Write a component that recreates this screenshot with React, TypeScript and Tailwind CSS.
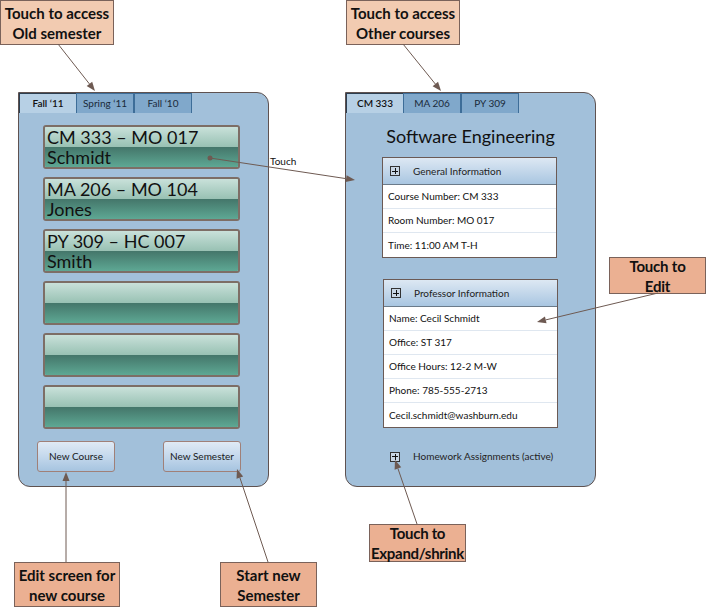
import React from "react";

const font = { fontFamily: "Lato, 'Open Sans', 'Liberation Sans', sans-serif" };

function Callout({ lines, className }: { lines: string[]; className: string }) {
  return (
    <div
      className={`absolute flex flex-col items-center justify-center border border-[#7a625a] text-[15px] font-bold leading-[20px] text-[#111] ${className}`}
    >
      {lines.map((l) => (
        <span key={l}>{l}</span>
      ))}
    </div>
  );
}

function Tabs({ labels }: { labels: string[] }) {
  return (
    <div className="flex h-[20px]">
      {labels.map((l, i) => (
        <div
          key={l}
          className={
            i === 0
              ? "flex w-[57px] items-center justify-center border-t border-l border-[#2c3e50] bg-[#b7d0e5] text-[10px] font-semibold text-[#111]"
              : "flex w-[58px] items-center justify-center border border-b-0 border-[#3d6d98] bg-[#80a8cb] text-[10px] text-[#1a2a3a]"
          }
        >
          {l}
        </div>
      ))}
    </div>
  );
}

function Card({ top, bottom }: { top?: string; bottom?: string }) {
  return (
    <div className="flex h-[44px] w-[197px] flex-col overflow-hidden rounded-[3px] border-2 border-[#7d6e66] text-[18px] leading-[20px] text-[#111]">
      <div className="flex h-[20px] items-center bg-gradient-to-b from-[#c9e1da] to-[#98c1b3] pl-[2px]">{top}</div>
      <div className="flex flex-1 items-center bg-gradient-to-b from-[#44766a] to-[#5ea894] pl-[2px]">{bottom}</div>
    </div>
  );
}

function Btn({ label }: { label: string }) {
  return (
    <div className="flex h-[31px] w-[78px] items-center justify-center rounded-[3px] border border-[#a08078] bg-gradient-to-b from-[#e0eaf5] via-[#c4d8ec] to-[#a6c4e0] text-[10px] text-[#1a1a1a]">
      {label}
    </div>
  );
}

function Plus() {
  return (
    <div className="relative h-[10px] w-[10px] border border-[#333] bg-[#c8d6e4]">
      <div className="absolute left-[1px] right-[1px] top-[3.5px] h-[1px] bg-[#111]" />
      <div className="absolute top-[1px] bottom-[1px] left-[3.5px] w-[1px] bg-[#111]" />
    </div>
  );
}

function InfoBox({ title, rows, className }: { title: string; rows: string[]; className: string }) {
  return (
    <div className={`flex w-[175px] flex-col border border-[#6b5a55] bg-white ${className}`}>
      <div className="flex h-[27px] items-center gap-[13px] border-b border-[#6b7b8a] bg-gradient-to-b from-[#dde8f3] to-[#a9c6e1] pl-[7px] text-[10px] text-[#222]">
        <Plus />
        <span>{title}</span>
      </div>
      {rows.map((r, i) => (
        <div
          key={r}
          className={`flex h-[24px] items-center pl-[5px] text-[10px] text-[#111] ${i < rows.length - 1 ? "border-b border-[#dfe7f0]" : ""}`}
        >
          {r}
        </div>
      ))}
    </div>
  );
}

function Arrows() {
  const c = "#6e5a52";
  const lines: [number, number, number, number][] = [
    [58, 44, 95, 91],
    [403, 44, 441, 91],
    [210, 158, 355, 180],
    [658, 293, 537, 322],
    [417, 524, 395, 460],
    [66, 562, 66, 472],
    [268, 562, 237, 469],
  ];
  return (
    <svg className="pointer-events-none absolute left-0 top-0" width="706" height="607">
      {lines.map(([x1, y1, x2, y2], i) => {
        const a = Math.atan2(y2 - y1, x2 - x1);
        const L = 9;
        const W = 3.5;
        const bx = x2 - L * Math.cos(a);
        const by = y2 - L * Math.sin(a);
        const px = -Math.sin(a) * W;
        const py = Math.cos(a) * W;
        return (
          <g key={i}>
            <line x1={x1} y1={y1} x2={bx} y2={by} stroke={c} strokeWidth={1} />
            <polygon points={`${x2},${y2} ${bx + px},${by + py} ${bx - px},${by - py}`} fill={c} />
          </g>
        );
      })}
      <circle cx={210} cy={158} r={2.5} fill={c} />
    </svg>
  );
}

export default function App() {
  return (
    <div className="relative h-[607px] w-[706px] overflow-hidden bg-white" style={font}>
      {/* Left panel */}
      <div className="absolute left-[18px] top-[92px] flex h-[395px] w-[251px] flex-col rounded-tr-[12px] rounded-b-[12px] border border-[#5f5250] bg-[#a2c0da]">
        <Tabs labels={["Fall \u201811", "Spring \u201811", "Fall \u201810"]} />
        <div className="flex flex-col gap-[8px] pl-[24px] pt-[12px]">
          <Card top="CM 333 – MO 017" bottom="Schmidt" />
          <Card top="MA 206 – MO 104" bottom="Jones" />
          <Card top="PY 309 – HC 007" bottom="Smith" />
          <Card />
          <Card />
          <Card />
        </div>
        <div className="flex justify-between pl-[18px] pr-[27px] pt-[12px]">
          <Btn label="New Course" />
          <Btn label="New Semester" />
        </div>
      </div>

      {/* Right panel */}
      <div className="absolute left-[345px] top-[92px] flex h-[395px] w-[251px] flex-col rounded-tr-[12px] rounded-b-[12px] border border-[#5f5250] bg-[#a2c0da]">
        <Tabs labels={["CM 333", "MA 206", "PY 309"]} />
        <div className="pt-[10px] text-center text-[18px] leading-[26px] text-[#111]">Software Engineering</div>
        <InfoBox
          className="ml-[36px] mt-[8px]"
          title="General Information"
          rows={["Course Number: CM 333", "Room Number: MO 017", "Time: 11:00 AM T-H"]}
        />
        <InfoBox
          className="ml-[37px] mt-[21px] w-[174px]"
          title="Professor Information"
          rows={["Name: Cecil Schmidt", "Office: ST 317", "Office Hours: 12-2 M-W", "Phone: 785-555-2713", "Cecil.schmidt@washburn.edu"]}
        />
        <div className="ml-[44px] mt-[21px] flex items-center gap-[13px] text-[10px] text-[#222]">
          <Plus />
          <span>Homework Assignments (active)</span>
        </div>
      </div>

      <div className="absolute left-[270px] top-[154px] text-[10px] text-[#111]">Touch</div>

      <Callout className="left-0 top-0 h-[45px] w-[114px] bg-[#f2cbb1]" lines={["Touch to access", "Old semester"]} />
      <Callout className="left-[346px] top-0 h-[45px] w-[114px] bg-[#f2cbb1]" lines={["Touch to access", "Other courses"]} />
      <Callout className="left-[609px] top-[257px] h-[37px] w-[97px] bg-[#ebb092] text-[13px] leading-[17px] tracking-[-0.2px]" lines={["Touch to", "Edit"]} />
      <Callout className="left-[369px] top-[524px] h-[38px] w-[97px] bg-[#ebb092] text-[13px] leading-[17px] tracking-[-0.3px]" lines={["Touch to", "Expand/shrink"]} />
      <Callout className="left-[14px] top-[562px] h-[45px] w-[106px] bg-[#ebb092]" lines={["Edit screen for", "new course"]} />
      <Callout className="left-[220px] top-[562px] h-[45px] w-[97px] bg-[#ebb092]" lines={["Start new", "Semester"]} />

      <Arrows />
    </div>
  );
}
